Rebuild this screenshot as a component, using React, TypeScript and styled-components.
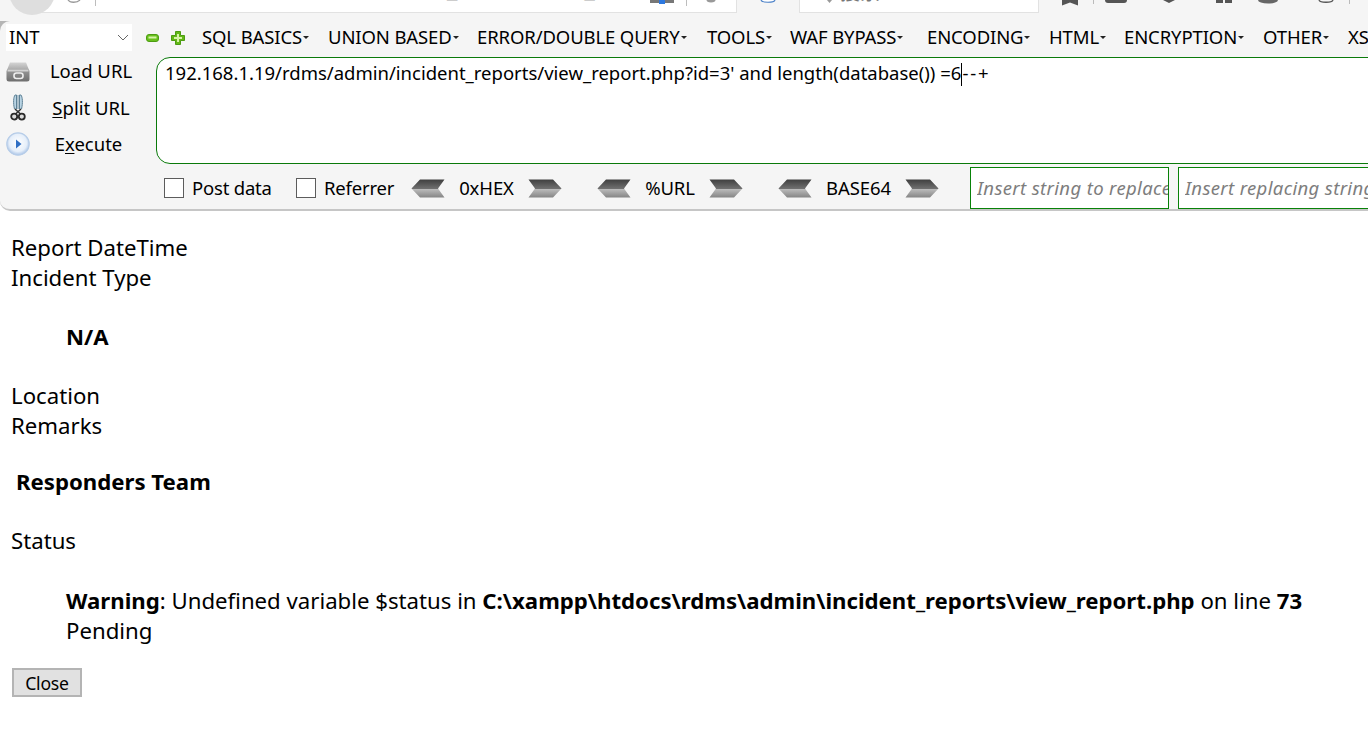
import React from 'react';
import styled, { createGlobalStyle } from 'styled-components';

const Global = createGlobalStyle`
  html, body { margin: 0; padding: 0; background: #fff; overflow: hidden; height: 755px; }
  body { font-family: "Noto Sans", "Open Sans", sans-serif; color: #000; }
`;

const Page = styled.div`
  width: 1368px;
  height: 755px;
  overflow: hidden;
`;

const ChromeStrip = styled.div`
  display: flex;
  height: 21px;
  background: #f5f5f5;
`;
const BackCircle = styled.div`
  flex: none;
  width: 46px;
  height: 46px;
  margin: -31px 0 0 9px;
  border-radius: 50%;
  background: #dedede;
  display: flex;
  align-items: flex-end;
  justify-content: center;
  padding-bottom: 12px;
  box-sizing: border-box;
  position: relative;
  z-index: 2;
`;
const UrlBox = styled.div`
  flex: none;
  width: 705px;
  margin-left: -23px;
  height: 13px;
  box-sizing: border-box;
  background: #fff;
  border-bottom: 1px solid #e2e2e2;
  border-right: 1px solid #e2e2e2;
  display: flex;
  overflow: hidden;
`;
const ReloadWrap = styled.div`
  flex: none;
  width: 28px;
  margin-left: 35px;
  height: 12px;
  overflow: hidden;
`;
const UrlSep = styled.div`
  flex: none;
  width: 1px;
  height: 6px;
  background: #bdbdbd;
`;
const UrlText = styled.div`
  flex: none;
  width: 554px;
  margin: -27px 0 0 -5px;
  height: 40px;
  overflow: hidden;
  font-family: "DejaVu Sans", sans-serif;
  line-height: 30px;
  font-size: 20.5px;
  white-space: nowrap;
  color: #333;
`;
const UrlIcons = styled.div`
  flex: none;
  width: 41px;
`;
const TabGap = styled.div`
  flex: none;
  width: 62px;
  height: 13px;
  display: flex;
  justify-content: center;
`;
const SearchBox = styled.div`
  flex: none;
  width: 240px;
  height: 13px;
  box-sizing: border-box;
  background: #fff;
  border: 1px solid #e2e2e2;
  border-top: 0;
  overflow: hidden;
  padding-left: 27px;
  display: flex;
  gap: 8px;
`;
const SearchText = styled.div`
  margin-top: -22px;
  font-family: "Noto Sans CJK SC", sans-serif;
  font-size: 20px;
  line-height: 28px;
  color: #777;
`;
const Tools = styled.div`
  flex: none;
  display: flex;
  height: 8px;
  margin-left: 23px;
`;
const Tool = styled.svg<{ $ml?: number }>`
  flex: none;
  display: block;
  margin-left: ${p => p.$ml ?? 0}px;
`;

const PanelBack = styled.div`
  background: linear-gradient(to bottom, #b5b5b5 0, #b5b5b5 12px, #f5f5f5 12px, #f5f5f5 100px, #fff 100px);
`;
const Panel = styled.div`
  height: 190px;
  box-sizing: border-box;
  background: #f5f5f5;
  border-bottom: 2px solid #c6c6c6;
  border-radius: 10px 0 0 10px;
  overflow: hidden;
`;
const TopRow = styled.div`
  display: flex;
  align-items: flex-start;
  height: 32px;
  padding-left: 6px;
`;
const SelectBox = styled.div`
  flex: none;
  width: 126px;
  height: 27px;
  margin-top: 3px;
  background: #fff;
  box-sizing: border-box;
  padding: 0 3px 2px;
  display: flex;
  align-items: center;
  justify-content: space-between;
  font-size: 18.5px;
  svg { margin-top: 2px; }
`;
const MiniIcons = styled.div`
  flex: none;
  display: flex;
  gap: 12px;
  width: 70px;
  padding: 10px 0 0 14px;
  box-sizing: border-box;
`;
const Menu = styled.nav`
  display: flex;
  flex: none;
  padding-top: 2px;
  height: 27px;
  align-items: center;
`;
const MenuItem = styled.div<{ $w: number }>`
  flex: none;
  width: ${p => p.$w}px;
  display: flex;
  align-items: center;
  white-space: nowrap;
  font-size: 18.5px;
  letter-spacing: -0.12px;
`;
const Caret = styled.span`
  flex: none;
  margin: 1px 0 0 1px;
  width: 0;
  height: 0;
  border-left: 3.5px solid transparent;
  border-right: 3.5px solid transparent;
  border-top: 3.5px solid #222;
`;

const MiddleRow = styled.div`
  display: flex;
  height: 111px;
`;
const SideColumn = styled.div`
  flex: none;
  width: 156px;
  box-sizing: border-box;
  padding-left: 6px;
`;
const SideButton = styled.div`
  display: flex;
  align-items: center;
  height: 36.5px;
`;
const SideIcon = styled.div`
  flex: none;
  width: 24px;
  display: flex;
  justify-content: center;
`;
const SideLabel = styled.div<{ $pr?: number }>`
  flex: 1;
  text-align: center;
  padding: 0 ${p => p.$pr ?? 4}px 1px 0;
  font-size: 18.5px;
  white-space: nowrap;
  u { text-underline-offset: 2px; text-decoration-thickness: 1px; }
`;
const UrlArea = styled.div`
  flex: none;
  width: 1300px;
  height: 107px;
  margin-top: 4px;
  box-sizing: border-box;
  background: #fff;
  border: 1px solid #0a7a0a;
  border-radius: 14px 0 0 14px;
  padding: 2px 0 0 8px;
  font-size: 18.5px;
  line-height: 26px;
  white-space: nowrap;
`;
const TextCaret = styled.span`
  display: inline-block;
  width: 0;
  height: 23px;
  vertical-align: -6px;
  border-left: 1px solid #000;
`;
const Dashes = styled.span`
  letter-spacing: 1.8px;
`;

const BottomRow = styled.div`
  display: flex;
  align-items: center;
  height: 45px;
  box-sizing: border-box;
  padding: 3px 0 0 164px;
`;
const CheckBox = styled.span`
  flex: none;
  width: 20px;
  height: 20px;
  box-sizing: border-box;
  background: #fff;
  border: 1px solid #5c5c5c;
`;
const CheckLabel = styled.span<{ $w: number }>`
  flex: none;
  width: ${p => p.$w}px;
  margin: -1px 0 0 8px;
  font-size: 18.5px;
  letter-spacing: -0.2px;
  white-space: nowrap;
`;
const Encoder = styled.div<{ $mr: number }>`
  flex: none;
  display: flex;
  align-items: center;
  margin-right: ${p => p.$mr}px;
`;
const EncodeLabel = styled.span<{ $w: number }>`
  flex: none;
  width: ${p => p.$w}px;
  margin-top: -2px;
  text-align: center;
  font-size: 18.5px;
  letter-spacing: -0.1px;
`;
const ReplaceInput = styled.input<{ $w: number }>`
  flex: none;
  width: ${p => p.$w}px;
  height: 42px;
  box-sizing: border-box;
  margin: 0 9px 0 0;
  padding: 0 0 2px 6px;
  background: #fff;
  border: 1px solid #088208;
  border-radius: 0;
  outline: none;
  font-family: "Noto Sans", sans-serif;
  font-size: 18.5px;
  font-style: italic;
  letter-spacing: 0.35px;
  &::placeholder { color: #7d7d7d; opacity: 1; }
`;

const Content = styled.main`
  padding: 22px 0 0 11px;
  font-size: 22.2px;
  line-height: 30px;
`;
const Line = styled.div<{ $mt?: number }>`
  margin-top: ${p => p.$mt ?? 0}px;
  white-space: nowrap;
`;
const Indented = styled.div<{ $mt: number }>`
  margin: ${p => p.$mt}px 0 0 55px;
  white-space: nowrap;
`;
const TeamHeading = styled.div`
  margin: 26px 0 0 5px;
  font-weight: 700;
`;
const Bold = styled.b`
  font-weight: 700;
`;
const CloseButton = styled.button`
  display: block;
  margin: 22px 0 0 1px;
  width: 70px;
  height: 29px;
  padding: 0;
  background: #e1e1e1;
  border: 2px solid #b4b4b4;
  font-family: "Noto Sans", sans-serif;
  font-size: 17.6px;
  letter-spacing: -0.2px;
  color: #000;
`;

const Arrow = ({ dir }: { dir: 'l' | 'r' }) => (
  <svg width="34" height="19" viewBox="0 0 34 19" style={{ flex: 'none', transform: dir === 'r' ? 'scaleX(-1)' : undefined }}>
    <defs>
      <linearGradient id="arrowFill" x1="0" y1="0" x2="0" y2="1">
        <stop offset="0" stopColor="#3f3f3f" />
        <stop offset="0.5" stopColor="#6f6f6f" />
        <stop offset="0.52" stopColor="#bdbdbd" />
        <stop offset="1" stopColor="#858585" />
      </linearGradient>
    </defs>
    <path d="M9 0.5 H33.5 L27 9.5 L33.5 18.5 H9 L0.5 9.5 Z" fill="url(#arrowFill)" />
  </svg>
);

const LoadIcon = () => (
  <svg width="24" height="21" viewBox="0 0 24 21">
    <defs>
      <linearGradient id="loadTop" x1="0" y1="0" x2="0" y2="1">
        <stop offset="0" stopColor="#d4d4d4" />
        <stop offset="1" stopColor="#a8a8a8" />
      </linearGradient>
      <linearGradient id="loadBox" x1="0" y1="0" x2="0" y2="1">
        <stop offset="0" stopColor="#9c9c9c" />
        <stop offset="1" stopColor="#6e6e6e" />
      </linearGradient>
    </defs>
    <path d="M4 1.5 H20 L23 9 H1 Z" fill="url(#loadTop)" />
    <rect x="0.5" y="8" width="23" height="12.5" rx="2.5" fill="url(#loadBox)" />
    <rect x="1.5" y="8.5" width="21" height="2" fill="#d2d2d2" />
    <rect x="8" y="12" width="9" height="5.5" rx="2.5" fill="none" stroke="#eee" strokeWidth="1.6" />
  </svg>
);
const SplitIcon = () => (
  <svg width="16" height="27" viewBox="0 0 16 27">
    <path d="M4.5 15 C3 9 3.5 3 5 1 L6.5 1 L6.5 15 M11.5 15 C13 9 12.5 3 11 1 L9.5 1 L9.5 15" fill="#b9d4e4" stroke="#5f8296" strokeWidth="1" />
    <rect x="7.4" y="1" width="1.2" height="14" fill="#7f9fb2" />
    <path d="M5 15 L10.5 20 M11 15 L5.5 20" stroke="#333" strokeWidth="1.6" />
    <circle cx="4.2" cy="22.6" r="3" fill="#ddd" stroke="#2b2b2b" strokeWidth="1.8" />
    <circle cx="11.8" cy="22.6" r="3" fill="#ddd" stroke="#2b2b2b" strokeWidth="1.8" />
  </svg>
);
const ExecIcon = () => (
  <svg width="24" height="24" viewBox="0 0 24 24">
    <defs>
      <radialGradient id="execFill" cx="0.5" cy="0.45" r="0.55">
        <stop offset="0" stopColor="#ffffff" />
        <stop offset="0.7" stopColor="#e6effa" />
        <stop offset="1" stopColor="#a9c3e6" />
      </radialGradient>
    </defs>
    <circle cx="12" cy="12" r="11.2" fill="url(#execFill)" stroke="#b7cde8" strokeWidth="1.2" />
    <path d="M10 7.5 L15.5 12 L10 16.5 Z" fill="#2f6fc4" />
  </svg>
);
const MinusIcon = () => (
  <svg width="13" height="8" viewBox="0 0 13 8" style={{ flex: 'none', marginTop: 3 }}>
    <rect x="0.5" y="0.5" width="12" height="7" rx="2.5" fill="#68c01c" stroke="#4d9c12" />
    <rect x="2.5" y="2.5" width="8" height="2" fill="#d7f3a8" />
  </svg>
);
const PlusIcon = () => (
  <svg width="14" height="14" viewBox="0 0 14 14" style={{ flex: 'none' }}>
    <path d="M4.5 0.5 H9.5 V4.5 H13.5 V9.5 H9.5 V13.5 H4.5 V9.5 H0.5 V4.5 H4.5 Z" fill="#62b816" stroke="#4d9c12" strokeLinejoin="round" />
    <path d="M6 3 H8 V6 H11 V8 H8 V11 H6 V8 H3 V6 H6 Z" fill="#d7f3a8" />
  </svg>
);

const menu: [string, number][] = [
  ['SQL BASICS', 126], ['UNION BASED', 149], ['ERROR/DOUBLE QUERY', 230], ['TOOLS', 83],
  ['WAF BYPASS', 137], ['ENCODING', 122], ['HTML', 75], ['ENCRYPTION', 139], ['OTHER', 85],
];

export default function App() {
  return (
    <Page>
      <Global />
      <ChromeStrip>
        <BackCircle>
          <svg width="14" height="8" viewBox="0 0 14 8"><path d="M3 0 H11 L7 5 Z" fill="#444" /></svg>
        </BackCircle>
        <UrlBox>
          <ReloadWrap>
            <svg width="14" height="4" viewBox="0 0 14 4" style={{ display: 'block' }}><path d="M1 0 C3 3 10 3 13 0" fill="none" stroke="#999" strokeWidth="1.3" /></svg>
          </ReloadWrap>
          <UrlSep />
          <UrlText>192.168.1.19/rdms/admin/incident_reports/view_report.php</UrlText>
          <UrlIcons>
            <svg width="30" height="8" viewBox="0 0 30 8" style={{ display: 'block', marginLeft: 5 }}><rect x="0" y="0" width="24" height="3" fill="#777" /><rect x="9" y="0" width="6" height="4" fill="#2d78e0" /></svg>
          </UrlIcons>
          <UrlSep />
          <svg width="10" height="3" viewBox="0 0 10 3" style={{ flex: 'none', marginLeft: 19 }}><ellipse cx="5" cy="0" rx="4.5" ry="2.4" fill="#999" /></svg>
        </UrlBox>
        <TabGap>
          <svg width="16" height="4" viewBox="0 0 16 4"><path d="M1 0 C2 3 14 3 15 0" fill="#fff" stroke="#4a80c8" strokeWidth="1.2" /></svg>
        </TabGap>
        <SearchBox>
          <svg width="5" height="3" viewBox="0 0 5 3" style={{ flex: 'none' }}><path d="M0 0 H5 L2.5 3 Z" fill="#999" /></svg>
          <SearchText>搜索</SearchText>
        </SearchBox>
        <Tools>
          <Tool width="16" height="6" viewBox="0 0 16 6"><path d="M0 0 H16 V5.5 L8 2.5 L0 5.5 Z" fill="#555" /></Tool>
          <Tool $ml={15} width="1" height="4" viewBox="0 0 1 4"><rect width="1" height="4" fill="#bbb" /></Tool>
          <Tool $ml={11} width="22" height="3" viewBox="0 0 22 3"><path d="M0 0 H22 C22 2 21 3 19 3 H3 C1 3 0 2 0 0 Z" fill="#555" /></Tool>
          <Tool $ml={36} width="12" height="3" viewBox="0 0 12 3"><path d="M0 0 H12 L6 3 Z" fill="#555" /></Tool>
          <Tool $ml={41} width="16" height="3" viewBox="0 0 16 3"><rect width="7" height="3" fill="#555" /><rect x="9" width="7" height="3" fill="#555" /></Tool>
          <Tool $ml={26} width="20" height="4" viewBox="0 0 20 4"><ellipse cx="10" cy="0" rx="10" ry="3.6" fill="#666" /></Tool>
          <Tool $ml={40} width="16" height="4" viewBox="0 0 16 4"><path d="M1 0 C2 3 14 3 15 0" fill="none" stroke="#555" strokeWidth="1.3" /></Tool>
          <Tool $ml={15} width="1" height="4" viewBox="0 0 1 4"><rect width="1" height="4" fill="#bbb" /></Tool>
        </Tools>
      </ChromeStrip>
      <PanelBack>
        <Panel>
          <TopRow>
            <SelectBox>
              INT
              <svg width="12" height="7" viewBox="0 0 12 7"><path d="M1 1 L6 6 L11 1" fill="none" stroke="#666" strokeWidth="1" /></svg>
            </SelectBox>
            <MiniIcons><MinusIcon /><PlusIcon /></MiniIcons>
            <Menu>
              {menu.map(([label, w]) => (
                <MenuItem key={label} $w={w}>{label}<Caret /></MenuItem>
              ))}
              <MenuItem $w={40}>XSS</MenuItem>
            </Menu>
          </TopRow>
          <MiddleRow>
            <SideColumn>
              <SideButton><SideIcon><LoadIcon /></SideIcon><SideLabel>Lo<u>a</u>d URL</SideLabel></SideButton>
              <SideButton><SideIcon><SplitIcon /></SideIcon><SideLabel><u>S</u>plit URL</SideLabel></SideButton>
              <SideButton><SideIcon><ExecIcon /></SideIcon><SideLabel $pr={9}>E<u>x</u>ecute</SideLabel></SideButton>
            </SideColumn>
            <UrlArea>192.168.1.19/rdms/admin/incident_reports/view_report.php?id=3' and length(database()) =6<TextCaret /><Dashes>--</Dashes>+</UrlArea>
          </MiddleRow>
          <BottomRow>
            <CheckBox /><CheckLabel $w={104}>Post data</CheckLabel>
            <CheckBox /><CheckLabel $w={87}>Referrer</CheckLabel>
            <Encoder $mr={35}><Arrow dir="l" /><EncodeLabel $w={83}>0xHEX</EncodeLabel><Arrow dir="r" /></Encoder>
            <Encoder $mr={35}><Arrow dir="l" /><EncodeLabel $w={78}>%URL</EncodeLabel><Arrow dir="r" /></Encoder>
            <Encoder $mr={31}><Arrow dir="l" /><EncodeLabel $w={93}>BASE64</EncodeLabel><Arrow dir="r" /></Encoder>
            <ReplaceInput $w={199} placeholder="Insert string to replace" />
            <ReplaceInput $w={230} placeholder="Insert replacing string" />
          </BottomRow>
        </Panel>
      </PanelBack>
      <Content>
        <Line>Report DateTime</Line>
        <Line>Incident Type</Line>
        <Indented $mt={29}><Bold>N/A</Bold></Indented>
        <Line $mt={29}>Location</Line>
        <Line>Remarks</Line>
        <TeamHeading>Responders Team</TeamHeading>
        <Line $mt={29}>Status</Line>
        <Indented $mt={30}><Bold>Warning</Bold>: Undefined variable $status in <Bold>C:\xampp\htdocs\rdms\admin\incident_reports\view_report.php</Bold> on line <Bold>73</Bold></Indented>
        <Indented $mt={0}>Pending</Indented>
        <CloseButton>Close</CloseButton>
      </Content>
    </Page>
  );
}
